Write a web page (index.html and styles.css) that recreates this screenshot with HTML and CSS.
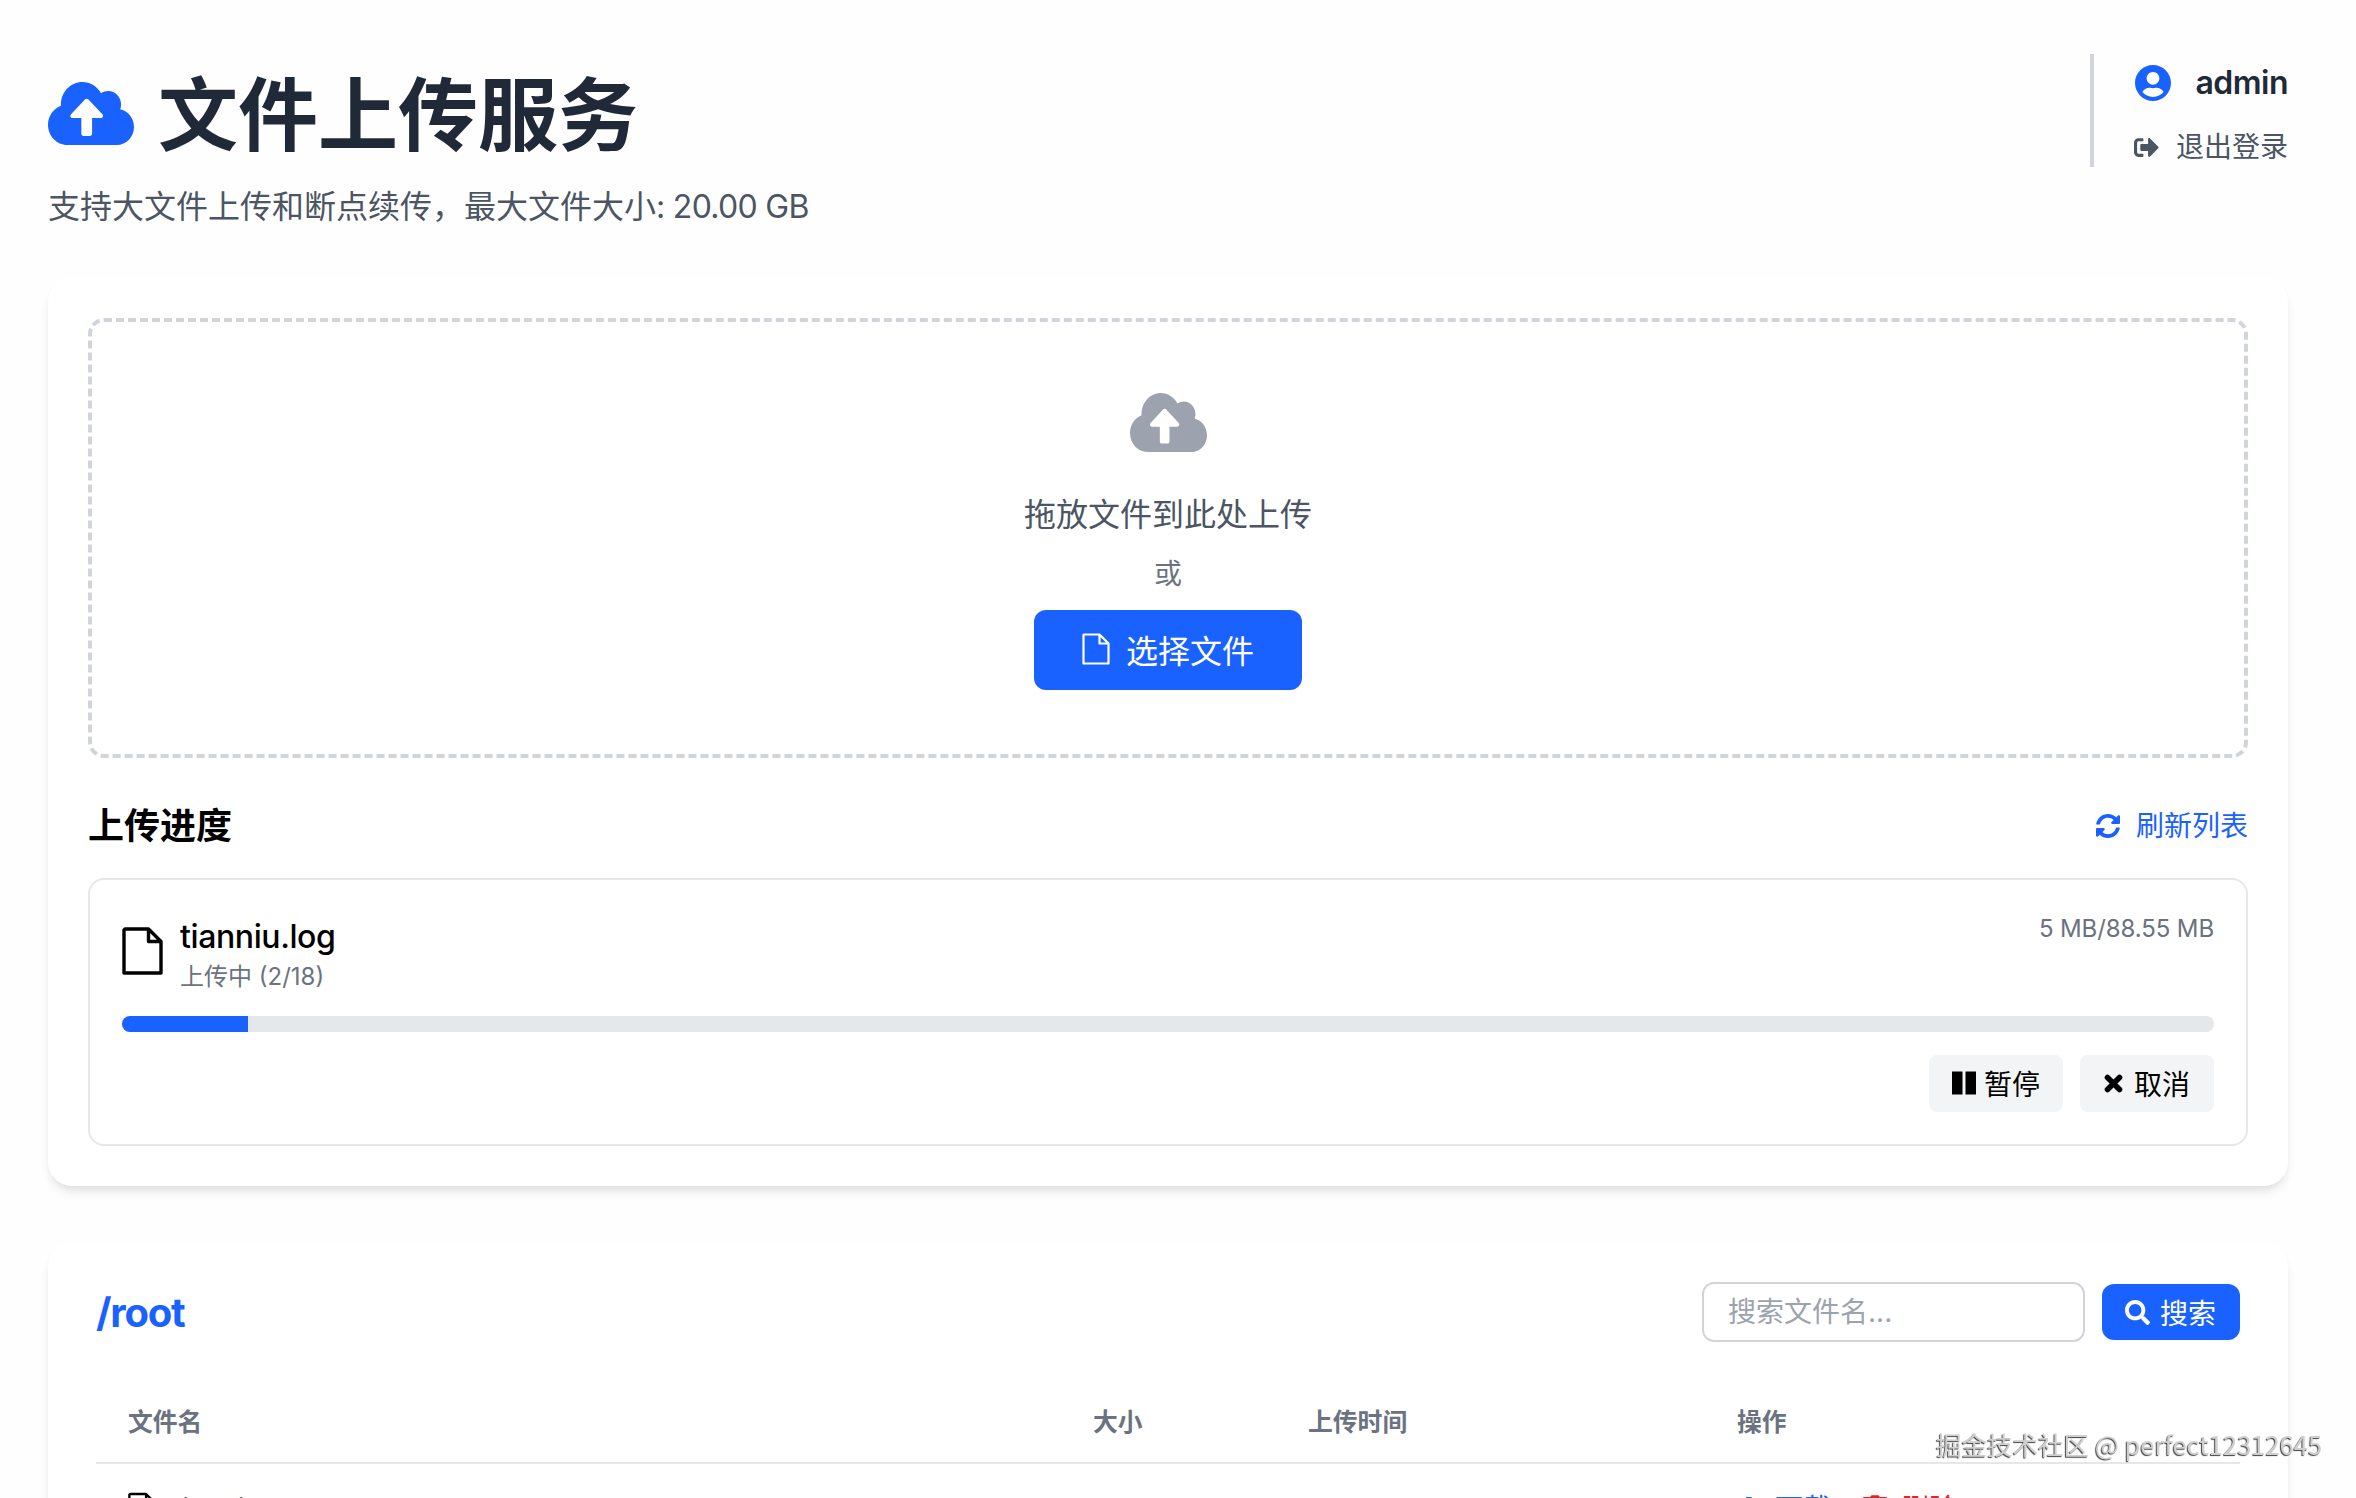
FILE: index.html
```html
<!DOCTYPE html>
<html lang="zh-CN">
<head>
<meta charset="utf-8">
<title>文件上传服务</title>
<link rel="stylesheet" href="styles.css">
</head>
<body>
<div class="page">
  <header class="header">
    <div class="brand">
      <h1 class="title">
        <svg class="title-icon" viewBox="0 32 640 448" preserveAspectRatio="none"><path fill="currentColor" d="M537.6 226.6c4.1-10.7 6.4-22.4 6.4-34.6 0-53-43-96-96-96-19.7 0-38.1 6-53.3 16.2C367 64.2 315.3 32 256 32c-88.4 0-160 71.6-160 160 0 2.7.1 5.4.2 8.1C40.2 219.8 0 273.2 0 336c0 79.5 64.5 144 144 144h368c70.7 0 128-57.3 128-128 0-61.9-44-113.6-102.4-125.4zM393.4 288H328v112c0 8.8-7.2 16-16 16h-48c-8.8 0-16-7.2-16-16V288h-65.4c-14.3 0-21.4-17.2-11.3-27.3l105.4-105.4c6.2-6.2 16.4-6.2 22.6 0l105.4 105.4c10.1 10.1 2.9 27.3-11.3 27.3z"/></svg>
        <span>文件上传服务</span>
      </h1>
      <p class="subtitle">支持大文件上传和断点续传，最大文件大小<span class="tight">: 20.00 GB</span></p>
    </div>
    <div class="user">
      <div class="user-name">
        <svg class="user-icon" viewBox="0 8 496 496"><path fill="currentColor" d="M248 8C111 8 0 119 0 256s111 248 248 248 248-111 248-248S385 8 248 8zm0 96c48.6 0 88 39.4 88 88s-39.4 88-88 88-88-39.4-88-88 39.4-88 88-88zm0 344c-58.7 0-111.3-26.6-146.5-68.2 18.8-35.4 55.6-59.8 98.5-59.8 2.4 0 4.8.4 7.1 1.1 13 4.2 26.6 6.9 40.9 6.9 14.3 0 28-2.7 40.9-6.9 2.3-.7 4.7-1.1 7.1-1.1 42.9 0 79.7 24.4 98.5 59.8C359.3 421.4 306.7 448 248 448z"/></svg>
        <span>admin</span>
      </div>
      <a class="logout">
        <svg class="logout-icon" viewBox="0 64 512 384"><path fill="currentColor" d="M497 273L329 441c-15 15-41 4.500-41-17v-96H152c-13.300 0-24-10.700-24-24v-96c0-13.300 10.700-24 24-24h136V88c0-21.400 25.900-32 41-17l168 168c9.300 9.400 9.300 24.600 0 34zM192 436v-40c0-6.600-5.400-12-12-12H96c-17.700 0-32-14.300-32-32V160c0-17.700 14.300-32 32-32h84c6.600 0 12-5.400 12-12V76c0-6.600-5.400-12-12-12H96c-53 0-96 43-96 96v192c0 53 43 96 96 96h84c6.600 0 12-5.400 12-12z"/></svg>
        <span>退出登录</span>
      </a>
    </div>
  </header>

  <section class="card upload-card">
    <div class="dropzone">
      <svg class="drop-icon" viewBox="0 32 640 448" preserveAspectRatio="none"><path fill="currentColor" d="M537.6 226.6c4.1-10.7 6.4-22.4 6.4-34.6 0-53-43-96-96-96-19.7 0-38.1 6-53.3 16.2C367 64.2 315.3 32 256 32c-88.4 0-160 71.6-160 160 0 2.7.1 5.4.2 8.1C40.2 219.8 0 273.2 0 336c0 79.5 64.5 144 144 144h368c70.7 0 128-57.3 128-128 0-61.9-44-113.6-102.4-125.4zM393.4 288H328v112c0 8.8-7.2 16-16 16h-48c-8.8 0-16-7.2-16-16V288h-65.4c-14.3 0-21.4-17.2-11.3-27.3l105.4-105.4c6.2-6.2 16.4-6.2 22.6 0l105.4 105.4c10.1 10.1 2.9 27.3-11.3 27.3z"/></svg>
      <p class="drop-text">拖放文件到此处上传</p>
      <p class="drop-or">或</p>
      <button class="primary-btn choose-btn">
        <svg class="choose-icon" viewBox="0 0 28 32"><path fill="none" stroke="currentColor" stroke-width="2.2" stroke-linejoin="round" d="M2 1.500h15.500L26.500 10.500V30.500H1.500V2zM17.500 1.500V10.500H26.500"/></svg>
        <span>选择文件</span>
      </button>
    </div>

    <div class="section-row">
      <h2 class="section-title">上传进度</h2>
      <a class="refresh">
        <svg class="refresh-icon" viewBox="8 8 496 496"><path fill="currentColor" d="M370.72 133.28C339.458 104.008 298.888 87.962 255.848 88c-77.458.068-144.328 53.178-162.791 126.85-1.344 5.363-6.122 9.15-11.651 9.150H24.103c-7.498 0-13.194-6.807-11.807-14.176C33.933 94.924 134.813 8 256 8c66.448 0 126.791 26.136 171.315 68.685L463.03 40.970C478.149 25.851 504 36.559 504 57.941V192c0 13.255-10.745 24-24 24H345.941c-21.382 0-32.090-25.851-16.971-40.971l41.750-41.749zM32 296h134.059c21.382 0 32.090 25.851 16.971 40.971l-41.750 41.750c31.262 29.273 71.835 45.319 114.876 45.280 77.418-.070 144.315-53.144 162.787-126.849 1.344-5.363 6.122-9.150 11.651-9.150h57.304c7.498 0 13.194 6.807 11.807 14.176C478.067 417.076 377.187 504 256 504c-66.448 0-126.791-26.136-171.315-68.685L48.970 471.030C33.851 486.149 8 475.441 8 454.059V320c0-13.255 10.745-24 24-24z"/></svg>
        <span>刷新列表</span>
      </a>
    </div>

    <div class="task">
      <div class="task-head">
        <div class="task-file">
          <svg class="task-icon" viewBox="0 0 41 48"><path fill="none" stroke="currentColor" stroke-width="3.400" stroke-linejoin="round" d="M3 2h23.500L39 14.500V46H2V3zM26.500 2V14.500H39"/></svg>
          <div>
            <div class="task-name">tianniu.log</div>
            <div class="task-status">上传中 (2/18)</div>
          </div>
        </div>
        <div class="task-size">5 MB/88.55 MB</div>
      </div>
      <div class="bar"><div class="bar-fill" style="width:6.020%"></div></div>
      <div class="task-actions">
        <button class="ghost-btn">
          <svg class="pause-icon" viewBox="0 0 24 24"><path fill="currentColor" d="M0 .5h10.500v23H0zM13.500 .5H24v23H13.500z"/></svg>
          <span>暂停</span>
        </button>
        <button class="ghost-btn ghost-btn-wide">
          <svg class="cancel-icon" viewBox="0 0 19 19"><path fill="none" stroke="currentColor" stroke-width="5.600" stroke-linecap="round" d="M3.500 3.500L15.500 15.500M15.500 3.500L3.500 15.500"/></svg>
          <span>取消</span>
        </button>
      </div>
    </div>
  </section>

  <section class="card files-card">
    <div class="files-head">
      <h2 class="path">/root</h2>
      <form class="search">
        <input class="search-input" type="text" placeholder="搜索文件名...">
        <button class="primary-btn search-btn" type="button">
          <svg class="search-icon" viewBox="0 0 512 512"><path fill="currentColor" d="M505 442.700L405.300 343c-4.500-4.500-10.600-7-17-7H372c27.600-35.300 44-79.700 44-128C416 93.100 322.900 0 208 0S0 93.100 0 208s93.100 208 208 208c48.300 0 92.700-16.400 128-44v16.300c0 6.400 2.500 12.500 7 17l99.700 99.700c9.400 9.400 24.600 9.400 33.900 0l28.300-28.300c9.400-9.400 9.400-24.600.1-34zM208 336c-70.700 0-128-57.200-128-128 0-70.700 57.200-128 128-128 70.700 0 128 57.200 128 128 0 70.700-57.200 128-128 128z"/></svg>
          <span>搜索</span>
        </button>
      </form>
    </div>
    <table class="files">
      <colgroup>
        <col class="col-name"><col class="col-size"><col class="col-date"><col class="col-ops">
      </colgroup>
      <thead>
        <tr><th>文件名</th><th>大小</th><th>上传时间</th><th>操作</th></tr>
      </thead>
      <tbody>
        <tr>
          <td class="cell-name">
            <svg class="row-icon" viewBox="0 0 41 48"><path fill="none" stroke="currentColor" stroke-width="3.400" stroke-linejoin="round" d="M3 2h23.500L39 14.500V46H2V3zM26.500 2V14.500H39"/></svg>
            <span>tianniu.log</span>
          </td>
          <td class="cell-muted">88.55 MB</td>
          <td class="cell-muted">2025-04-18 16:00:00</td>
          <td>
            <a class="row-link link-blue">
              <svg class="row-action-icon" viewBox="0 0 512 512"><path fill="currentColor" d="M216 0h80c13.300 0 24 10.700 24 24v168h87.700c17.800 0 26.700 21.500 14.100 34.100L269.700 378.300c-7.500 7.500-19.800 7.500-27.300 0L90.100 226.100c-12.600-12.600-3.700-34.100 14.100-34.100H192V24c0-13.300 10.700-24 24-24zm296 376v112c0 13.300-10.700 24-24 24H24c-13.300 0-24-10.700-24-24V376c0-13.300 10.700-24 24-24h146.700l49 49c20.100 20.100 52.500 20.100 72.600 0l49-49H488c13.300 0 24 10.700 24 24z"/></svg>
              <span>下载</span>
            </a>
            <a class="row-link link-red">
              <svg class="row-action-icon" viewBox="0 0 448 512"><path fill="currentColor" d="M432 32H312l-9.400-18.700A24 24 0 0 0 281.100 0H166.800a23.720 23.720 0 0 0-21.400 13.300L136 32H16A16 16 0 0 0 0 48v32a16 16 0 0 0 16 16h416a16 16 0 0 0 16-16V48a16 16 0 0 0-16-16zM53.200 467a48 48 0 0 0 47.900 45h245.800a48 48 0 0 0 47.900-45L416 128H32z"/></svg>
              <span>删除</span>
            </a>
          </td>
        </tr>
      </tbody>
    </table>
  </section>
</div>
<div class="watermark">掘金技术社区 @ perfect12312645</div>
</body>
</html>
```
FILE: styles.css
```css
* { box-sizing: border-box; }
html, body { margin: 0; height: 100%; overflow: hidden; }
body {
  background: #fefefe;
  color: #1f2937;
  font-family: Inter, "Noto Sans CJK SC", sans-serif;
}
p, h1, h2 { margin: 0; }
svg { display: block; flex: none; }
button { font-family: inherit; border: 0; cursor: pointer; }

.page { padding: 54px 68px 0 48px; }

.header { display: flex; justify-content: space-between; align-items: flex-start; height: 224px; }
.brand { padding-top: 21px; }
.title { display: flex; align-items: center; gap: 24px; font-size: 80px; line-height: 80px; font-weight: 700; color: #1f2937; }
.title-icon { width: 86px; height: 63px; margin-top: -3px; color: #1a62ff; }
.subtitle { margin-top: 30px; font-size: 32px; line-height: 44px; color: #4b5563; }
.tight { letter-spacing: -.7px; }

.user { width: 198px; height: 113px; border-left: 4px solid #d1d5db; padding: 11px 0 0 40px; }
.user-name { display: flex; align-items: center; justify-content: space-between; font-size: 32px; line-height: 36px; font-weight: 600; letter-spacing: -.5px; color: #1f2937; }
.user-icon { width: 36px; height: 36px; margin-left: 1px; color: #1a62ff; }
.logout { display: flex; align-items: center; justify-content: space-between; margin-top: 26px; font-size: 28px; line-height: 40px; color: #4b5563; }
.logout-icon { width: 25px; height: 19px; }

.card {
  background: #fff;
  border-radius: 24px;
  box-shadow: 0 8px 12px -3px rgba(0, 0, 0, .1), 0 4px 8px -3px rgba(0, 0, 0, .06);
}
.upload-card { padding: 40px; height: 908px; }

.dropzone {
  height: 440px;
  border: 4px dashed #d1d5db;
  border-radius: 16px;
  display: flex;
  flex-direction: column;
  align-items: center;
  padding-top: 71px;
}
.drop-icon { width: 77px; height: 59px; color: #9ca3af; }
.drop-text { margin-top: 41px; font-size: 32px; line-height: 44px; color: #4b5563; }
.drop-or { margin-top: 17px; font-size: 28px; line-height: 40px; color: #6b7280; }
.primary-btn { display: flex; align-items: center; justify-content: center; background: #1a62ff; color: #fff; }
.choose-btn { margin-top: 16px; width: 268px; height: 80px; gap: 16px; padding-bottom: 4px; border-radius: 12px; font-size: 32px; }
.choose-icon { width: 28px; height: 32px; }

.section-row { display: flex; justify-content: space-between; align-items: center; height: 48px; margin-top: 44px; }
.section-title { font-size: 36px; line-height: 48px; font-weight: 700; color: #000; }
.refresh { display: flex; align-items: center; gap: 16px; font-size: 28px; line-height: 40px; color: #1a62ff; }
.refresh-icon { width: 24px; height: 24px; }

.task { margin-top: 28px; height: 268px; border: 2px solid #e5e7eb; border-radius: 16px; padding: 32px; }
.task-head { display: flex; justify-content: space-between; align-items: flex-start; height: 76px; }
.task-file { display: flex; align-items: flex-start; gap: 17px; }
.task-icon { width: 41px; height: 48px; margin-top: 15px; color: #000; }
.task-name { padding-top: 3px; font-size: 32px; line-height: 44px; font-weight: 500; letter-spacing: -.4px; color: #000; }
.task-status { margin-top: 1px; font-size: 24px; line-height: 34px; color: #6b7280; }
.task-size { font-size: 24px; line-height: 34px; letter-spacing: -.1px; color: #6b7280; }

.bar { margin-top: 28px; height: 16px; background: #e5e7eb; border-radius: 8px; overflow: hidden; }
.bar-fill { height: 100%; background: #1a62ff; }

.task-actions { display: flex; justify-content: flex-end; gap: 17px; margin-top: 23px; }
.ghost-btn { display: flex; align-items: center; justify-content: center; width: 134px; height: 57px; gap: 8px; padding-bottom: 2px; border-radius: 8px; background: #f3f4f6; color: #000; font-size: 28px; }
.ghost-btn-wide { gap: 11px; }
.pause-icon { width: 24px; height: 24px; }
.cancel-icon { width: 19px; height: 19px; }

.files-card { margin-top: 56px; padding: 40px 48px 0; height: 400px; }
.files-head { display: flex; justify-content: space-between; align-items: center; height: 60px; }
.path { padding-top: 2px; font-size: 40px; line-height: 60px; font-weight: 700; letter-spacing: -1.2px; color: #1a62ff; }
.search { display: flex; align-items: center; gap: 17px; }
.search-input {
  width: 383px;
  height: 60px;
  padding: 0 24px;
  border: 2px solid #d1d5db;
  border-radius: 12px;
  background: #fff;
  font: 28px Inter, "Noto Sans CJK SC", sans-serif;
  color: #1f2937;
  outline: none;
}
.search-input::placeholder { color: #9ca3af; opacity: 1; }
.search-btn { width: 138px; height: 56px; gap: 10px; padding-left: 5px; border-radius: 12px; font-size: 28px; }
.search-icon { width: 25px; height: 25px; }

.files { width: 2144px; margin-top: 28px; border-collapse: collapse; table-layout: fixed; }
.col-name { width: 965px; }
.col-size { width: 215px; }
.col-date { width: 429px; }
.col-ops { width: 535px; }
.files th {
  height: 93px;
  padding: 8px 32px 0;
  border-bottom: 2px solid #e5e7eb;
  text-align: left;
  font-size: 24.8px;
  font-weight: 600;
  color: #6b7280;
}
.files td { padding: 25px 32px; font-size: 28px; line-height: 40px; vertical-align: top; }
.cell-name { display: flex; align-items: center; gap: 17px; color: #000; }
.cell-muted { color: #6b7280; }
.row-icon { width: 28px; height: 34px; }
.row-link { display: inline-flex; align-items: center; gap: 14px; margin-right: 24px; }
.row-action-icon { width: 24px; height: 28px; }
.link-blue { color: #1a62ff; }
.link-red { color: #dc2626; }

.watermark {
  position: fixed;
  left: 1936px;
  top: 1426px;
  font-family: "Noto Sans CJK SC", sans-serif;
  font-size: 25.5px;
  line-height: 36px;
  white-space: nowrap;
  color: #cfcfcf;
  text-shadow: -1px 1px 1px rgba(0, 0, 0, .75);
}
```
